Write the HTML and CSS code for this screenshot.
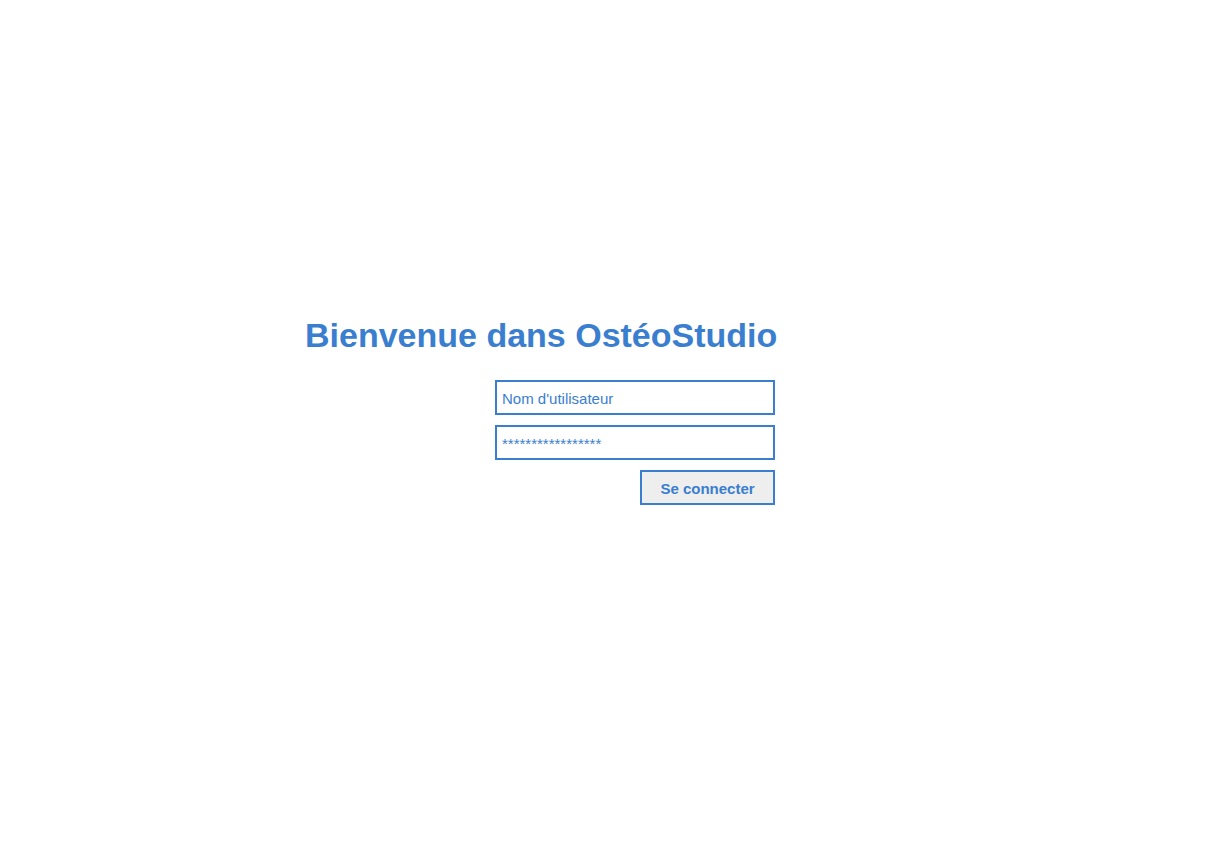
FILE: index.html
```html
<!DOCTYPE html>
<html lang="fr">
<head>
<meta charset="utf-8">
<title>OstéoStudio</title>
<link rel="stylesheet" href="styles.css">
</head>
<body>
<main class="page">
  <section class="login">
    <h1 class="title">Bienvenue dans OstéoStudio</h1>
    <form class="form">
      <input class="field" type="text" placeholder="Nom d'utilisateur">
      <input class="field" type="password" placeholder="*****************">
      <button class="btn" type="button">Se connecter</button>
    </form>
  </section>
</main>
</body>
</html>
```

FILE: styles.css
```css
html, body {
  margin: 0;
  padding: 0;
  background: #ffffff;
}
body {
  font-family: "Liberation Sans", Arial, sans-serif;
  color: #3a7ecf;
}
.page {
  padding-top: 315px;
  padding-left: 305px;
}
.login {
  width: 472px;
  display: flex;
  flex-direction: column;
}
.title {
  margin: 0;
  font-size: 34px;
  line-height: 40px;
  font-weight: bold;
  color: #3a7ecf;
  white-space: nowrap;
}
.form {
  margin-top: 25px;
  width: 470px;
  display: flex;
  flex-direction: column;
  align-items: flex-end;
  gap: 10px;
}
.field {
  box-sizing: border-box;
  width: 280px;
  height: 35px;
  margin: 0;
  padding: 2px 5px 0;
  border: 2px solid #3a7ecf;
  border-radius: 0;
  background: #ffffff;
  font-family: "Liberation Sans", Arial, sans-serif;
  font-size: 15px;
  color: #3a7ecf;
  outline: none;
}
.field::placeholder {
  color: #3a7ecf;
  opacity: 1;
}
.btn {
  box-sizing: border-box;
  width: 135px;
  height: 35px;
  margin: 0;
  padding: 2px 0 0;
  border: 2px solid #3a7ecf;
  border-radius: 0;
  background: #eeeeee;
  font-family: "Liberation Sans", Arial, sans-serif;
  font-size: 15px;
  font-weight: bold;
  color: #3a7ecf;
  cursor: pointer;
}
```
